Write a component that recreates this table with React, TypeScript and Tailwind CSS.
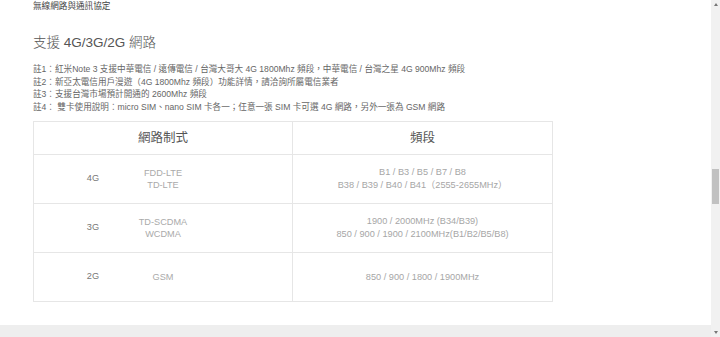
import React from "react";

const font = { fontFamily: '"Liberation Sans", "Noto Sans CJK TC", sans-serif' };

function Row({ gen, techs, bands }: { gen: string; techs: string[]; bands: string[] }) {
  return (
    <div className="flex h-[49px]">
      <div className="w-[259px] border-r border-b border-[#e6e6e6] flex items-center">
        <div className="w-[118px] text-center text-[9.2px] text-[#777]">{gen}</div>
        <div className="w-[22px] flex flex-col items-center text-[9.2px] leading-[12px] text-[#aaa] whitespace-nowrap">
          {techs.map((t) => (
            <div key={t}>{t}</div>
          ))}
        </div>
      </div>
      <div className="flex-1 border-r border-b border-[#e6e6e6] flex flex-col items-center justify-center text-[9.2px] leading-[12.6px] text-[#a6a6a6] whitespace-nowrap">
        {bands.map((b) => (
          <div key={b}>{b}</div>
        ))}
      </div>
    </div>
  );
}

export default function App() {
  return (
    <div className="w-[720px] h-[337px] flex overflow-hidden bg-white" style={font}>
      <div className="flex-1 flex flex-col">
        <div className="pl-[33px] flex-1">
          <div className="h-[12px] leading-[12px] text-[8.6px] text-[#444]">無線網路與通訊協定</div>
          <div className="mt-[21px] h-[20px] leading-[20px] text-[13.5px] text-[#555] font-light">支援 4G/3G/2G 網路</div>
          <div className="mt-[10px] h-[51px] text-[8.6px] leading-[12.6px] text-[#666] whitespace-nowrap">
            <div>註1：紅米Note 3 支援中華電信 / 遠傳電信 / 台灣大哥大 4G 1800Mhz 頻段，中華電信 / 台灣之星 4G 900Mhz 頻段</div>
            <div>註2：新亞太電信用戶漫遊（4G 1800Mhz 頻段）功能詳情，請洽詢所屬電信業者</div>
            <div>註3：支援台灣市場預計開通的 2600Mhz 頻段</div>
            <div>註4： 雙卡使用說明：micro SIM、nano SIM 卡各一；任意一張 SIM 卡可選 4G 網路，另外一張為 GSM 網路</div>
          </div>
          <div className="mt-[7px] w-[520px] border-l border-t border-[#e6e6e6]">
            <div className="flex h-[33px]">
              <div className="w-[259px] border-r border-b border-[#e6e6e6] flex items-center justify-center text-[12.5px] text-[#555]">網路制式</div>
              <div className="flex-1 border-r border-b border-[#e6e6e6] flex items-center justify-center text-[12.5px] text-[#555]">頻段</div>
            </div>
            <Row gen="4G" techs={["FDD-LTE", "TD-LTE"]} bands={["B1 / B3 / B5 / B7 / B8", "B38 / B39 / B40 / B41（2555-2655MHz）"]} />
            <Row gen="3G" techs={["TD-SCDMA", "WCDMA"]} bands={["1900 / 2000MHz (B34/B39)", "850 / 900 / 1900 / 2100MHz(B1/B2/B5/B8)"]} />
            <Row gen="2G" techs={["GSM"]} bands={["850 / 900 / 1800 / 1900MHz"]} />
          </div>
        </div>
        <div className="h-[12px] bg-[#eeeeee]" />
      </div>
      <div className="w-[9px] bg-[#f1f1f1] flex flex-col items-center">
        <div className="mt-[3px] w-0 h-0 border-l-[2px] border-r-[2px] border-b-[3px] border-l-transparent border-r-transparent border-b-[#777]" />
        <div className="mt-[163px] w-[7px] h-[35px] bg-[#c1c1c1]" />
        <div className="mt-auto mb-[3px] w-0 h-0 border-l-[2px] border-r-[2px] border-t-[3px] border-l-transparent border-r-transparent border-t-[#777]" />
      </div>
    </div>
  );
}
